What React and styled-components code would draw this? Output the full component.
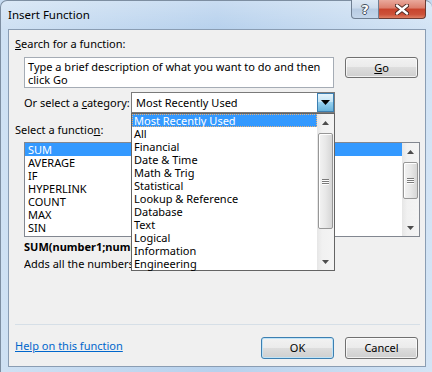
import React from 'react';
import styled, { createGlobalStyle, css } from 'styled-components';

const Global = createGlobalStyle`
  html, body { margin: 0; padding: 0; width: 432px; height: 372px; overflow: hidden; background: #c6dbf1; }
  body { font-family: "Noto Sans", "Open Sans", sans-serif; font-size: 11px; color: #000; }
  #root { width: 432px; height: 372px; }
  * { box-sizing: border-box; }
`;

const Window = styled.div`
  width: 432px;
  height: 372px;
  display: flex;
  flex-direction: column;
  padding: 0 6px 5px 7px;
  border-left: 1px solid #7d8ea1;
  border-top: 1px solid #7d8ea1;
  border-radius: 7px 7px 0 0;
  background:
    linear-gradient(180deg, rgba(255,255,255,0.25) 0, rgba(255,255,255,0) 28px),
    linear-gradient(90deg, #cfe1f3 0%, #c3d9f0 25%, #b7d1ed 50%, #c5daf0 75%, #d3e4f5 100%);
`;

const TitleBar = styled.div`
  height: 28px;
  display: flex;
  align-items: flex-start;
  justify-content: space-between;
`;

const TitleText = styled.div`
  padding-top: 7px;
  font-size: 11.5px;
  line-height: 14px;
  color: #000;
`;

const CaptionGroup = styled.div`
  display: flex;
  margin-top: -1px;
`;

const CaptionButton = styled.div`
  height: 19px;
  width: ${p => p.$w}px;
  display: flex;
  align-items: center;
  justify-content: center;
  border: 1px solid ${p => (p.$close ? '#6b3b33' : '#6f7f92')};
  border-top: none;
  ${p => p.$close ? css`
    border-left: none;
    border-radius: 0 0 4px 0;
    background: linear-gradient(180deg, #e9a99c 0%, #dc7e6c 45%, #c8442d 50%, #cc5139 80%, #de7e63 100%);
  ` : css`
    border-radius: 0 0 0 4px;
    background: linear-gradient(180deg, #dde8f4 0%, #ccdbec 45%, #b7cbe2 50%, #c4d6ea 100%);
  `}
`;

const HelpGlyph = styled.span`
  font-family: "DejaVu Sans", sans-serif;
  font-weight: bold;
  font-size: 13px;
  line-height: 13px;
  color: #fff;
  text-shadow: -1px 0 #44505e, 1px 0 #44505e, 0 -1px #44505e, 0 1px #44505e;
`;

const Client = styled.div`
  flex: 1;
  display: flex;
  flex-direction: column;
  border: 1px solid #8a9db3;
  background: #f0f0f0;
  padding: 7px 7px 7px 6px;
`;

const Label = styled.div`
  line-height: 14px;
  margin-top: ${p => p.$mt || 0}px;
  white-space: nowrap;
  font-weight: ${p => (p.$bold ? 'bold' : 'normal')};
  margin-left: ${p => p.$indent || 0}px;
  ${p => p.$clip && css`
    width: ${p.$clip}px;
    overflow: hidden;
  `}
`;

const Row = styled.div`
  display: flex;
  align-items: ${p => p.$align || 'flex-start'};
  margin-top: ${p => p.$mt || 0}px;
  padding-left: ${p => p.$indent || 0}px;
`;

const SearchBox = styled.div`
  width: 311px;
  height: 31px;
  border: 1px solid #a5acb5;
  background: #fff;
  padding: 2px 3px;
  line-height: 13px;
`;

const buttonBase = css`
  height: ${p => p.$h || 22}px;
  width: 73px;
  border: 1px solid ${p => (p.$default ? '#3c7fb1' : '#707070')};
  border-radius: 3px;
  display: flex;
  align-items: center;
  justify-content: center;
  line-height: 14px;
  background: linear-gradient(180deg, #f2f2f2 0%, #ebebeb 49%, #dddddd 50%, #cfcfcf 100%);
  box-shadow: inset 0 0 0 1px ${p => (p.$default ? '#bfe3f7' : 'rgba(255,255,255,0.7)')};
`;

const PushButton = styled.div`
  ${buttonBase}
  margin-left: ${p => p.$ml || 0}px;
`;

const CategoryLabel = styled.div`
  width: 107px;
  line-height: 14px;
`;

const ComboWrap = styled.div`
  position: relative;
  width: 204px;
`;

const Combo = styled.div`
  height: 21px;
  border: 1px solid #7a7a7a;
  background: #fff;
  display: flex;
  align-items: center;
  padding-left: 4px;
  line-height: 14px;
`;

const ComboText = styled.div`
  flex: 1;
`;

const ComboButton = styled.div`
  width: 17px;
  height: 19px;
  border: 1px solid #3c7fb1;
  display: flex;
  align-items: center;
  justify-content: center;
  background: linear-gradient(180deg, #e5f4fc 0%, #c4e5f6 45%, #98d1ef 50%, #68b3db 100%);
`;

const DropList = styled.div`
  position: absolute;
  left: 0;
  top: 21px;
  width: 204px;
  height: 158px;
  border: 1px solid #646464;
  background: #fff;
  display: flex;
  z-index: 5;
`;

const Items = styled.div`
  flex: 1;
  display: flex;
  flex-direction: column;
`;

const Item = styled.div`
  height: 13px;
  line-height: 13px;
  padding-left: ${p => p.$pl || 2}px;
  white-space: nowrap;
  ${p => p.$selected && css`
    background: #3399ff;
    color: #fff;
  `}
  ${p => p.$focus && css`
    outline: 1px dotted #e9b27a;
    outline-offset: -1px;
  `}
`;

const ScrollTrack = styled.div`
  width: 17px;
  display: flex;
  flex-direction: column;
  background: linear-gradient(90deg, #e6e6e6 0%, #f1f1f1 30%, #f4f4f4 100%);
`;

const ScrollArrow = styled.div`
  height: 17px;
  display: flex;
  align-items: center;
  justify-content: center;
`;

const Thumb = styled.div`
  margin-top: ${p => p.$mt}px;
  height: ${p => p.$h}px;
  margin-left: 1px;
  width: 15px;
  border: 1px solid #979797;
  border-radius: 2px;
  background: linear-gradient(90deg, #f3f3f3 0%, #e8e8e8 50%, #d6d6d6 100%);
  box-shadow: inset 1px 1px 0 #fff;
  display: flex;
  flex-direction: column;
  align-items: center;
  justify-content: center;
  gap: 1px;
`;

const Grip = styled.div`
  width: 7px;
  height: 1px;
  background: #7a7a7a;
  box-shadow: 0 1px 0 #fdfdfd;
`;

const Fill = styled.div`
  flex: 1;
`;

const ListBox = styled.div`
  margin-top: 5px;
  margin-left: 9px;
  width: 396px;
  height: 95px;
  border: 1px solid #828790;
  background: #fff;
  display: flex;
`;

const Separator = styled.div`
  height: 1px;
  background: #d6dfe7;
  margin-right: -2px;
`;

const ButtonRow = styled.div`
  margin-top: 12px;
  display: flex;
  align-items: center;
  gap: 11px;
`;

const HelpLink = styled.a`
  flex: 1;
  color: #0066cc;
  text-decoration: underline;
  line-height: 14px;
  margin-top: -4px;
`;

const Up = () => (
  <svg width="7" height="4" viewBox="0 0 7 4"><polygon points="3.5,0 7,4 0,4" fill="#4d4d4d" /></svg>
);
const Down = () => (
  <svg width="7" height="4" viewBox="0 0 7 4"><polygon points="0,0 7,0 3.5,4" fill="#4d4d4d" /></svg>
);

const Scrollbar = ({ thumbTop, thumbH }) => (
  <ScrollTrack>
    <ScrollArrow><Up /></ScrollArrow>
    <Thumb $mt={thumbTop} $h={thumbH}>
      <Grip /><Grip /><Grip />
    </Thumb>
    <Fill />
    <ScrollArrow><Down /></ScrollArrow>
  </ScrollTrack>
);

const categories = ['Most Recently Used', 'All', 'Financial', 'Date & Time', 'Math & Trig', 'Statistical', 'Lookup & Reference', 'Database', 'Text', 'Logical', 'Information', 'Engineering'];
const functions = ['SUM', 'AVERAGE', 'IF', 'HYPERLINK', 'COUNT', 'MAX', 'SIN'];

export default function App() {
  return (
    <>
      <Global />
      <Window>
        <TitleBar>
          <TitleText>Insert Function</TitleText>
          <CaptionGroup>
            <CaptionButton $w={28}><HelpGlyph>?</HelpGlyph></CaptionButton>
            <CaptionButton $w={47} $close>
              <svg width="14" height="11" viewBox="0 0 14 11">
                <path d="M2 1.5 L12 9.5 M12 1.5 L2 9.5" stroke="#4a2620" strokeWidth="4.2" strokeLinecap="round" />
                <path d="M2 1.5 L12 9.5 M12 1.5 L2 9.5" stroke="#fff" strokeWidth="2.4" strokeLinecap="round" />
              </svg>
            </CaptionButton>
          </CaptionGroup>
        </TitleBar>
        <Client>
          <Label><u>S</u>earch for a function:</Label>
          <Row $mt={6} $indent={9}>
            <SearchBox>Type a brief description of what you want to do and then<br />click Go</SearchBox>
            <PushButton $ml={11} $h={21}><u>G</u>o</PushButton>
          </Row>
          <Row $mt={4} $indent={9} $align="center">
            <CategoryLabel>Or select a <u>c</u>ategory:</CategoryLabel>
            <ComboWrap>
              <Combo>
                <ComboText>Most Recently Used</ComboText>
                <ComboButton>
                  <svg width="9" height="5" viewBox="0 0 9 5"><polygon points="0,0 9,0 4.5,5" fill="#000" /></svg>
                </ComboButton>
              </Combo>
              <DropList>
                <Items>
                  {categories.map((c, i) => (
                    <Item key={c} $selected={i === 0} $focus={i === 0}>{c}</Item>
                  ))}
                </Items>
                <Scrollbar thumbTop={2} thumbH={96} />
              </DropList>
            </ComboWrap>
          </Row>
          <Label $mt={10}>Select a functio<u>n</u>:</Label>
          <ListBox>
            <Items>
              {functions.map((f, i) => (
                <Item key={f} $pl={3} $selected={i === 0}>{f}</Item>
              ))}
            </Items>
            <Scrollbar thumbTop={2} thumbH={37} />
          </ListBox>
          <Label $mt={3} $indent={9} $bold $clip={107}>SUM(number1;number2;...)</Label>
          <Label $mt={3} $indent={9} $clip={107}>Adds all the numbers in a range of cells.</Label>
          <Fill />
          <Separator />
          <ButtonRow>
            <HelpLink href="#">Help on this function</HelpLink>
            <PushButton $default>OK</PushButton>
            <PushButton>Cancel</PushButton>
          </ButtonRow>
        </Client>
      </Window>
    </>
  );
}
